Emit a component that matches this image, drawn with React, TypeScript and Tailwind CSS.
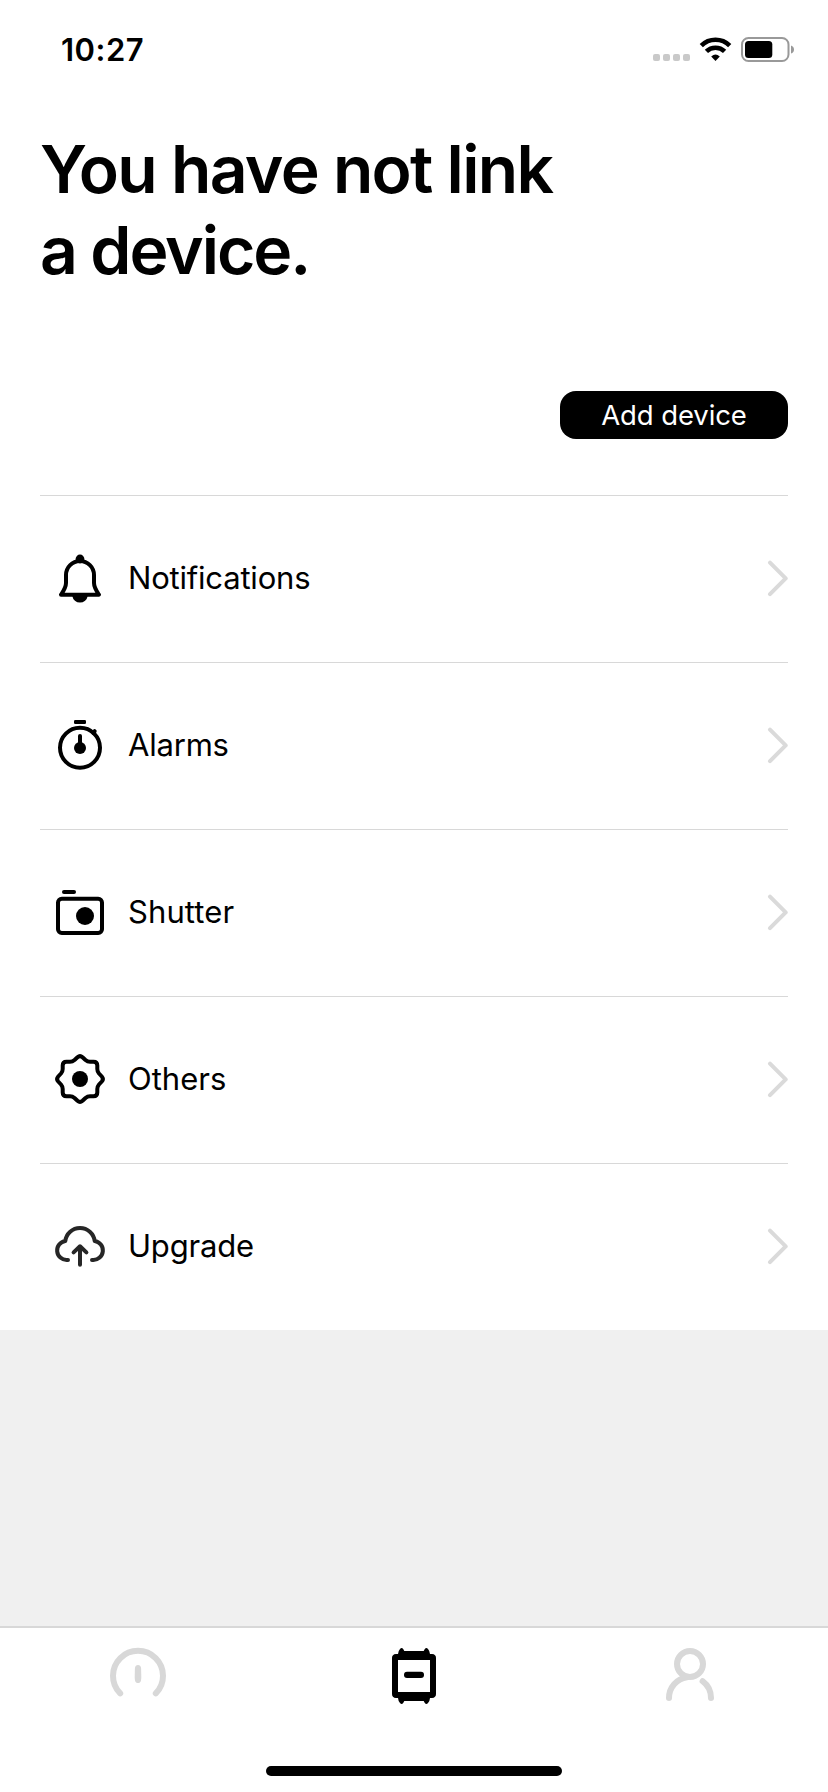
import type { ReactNode } from 'react';

const iconClass = 'h-[60px] w-[60px] shrink-0';

function BellIcon() {
  return (
    <svg viewBox="0 0 60 60" className={iconClass} fill="none" stroke="#000" strokeWidth="4" strokeLinejoin="round">
      <circle cx="30" cy="10" r="4.4" fill="#000" stroke="none" />
      <path d="M11 45.7C13.5 42 16 38.5 16 34V26a14 14 0 0 1 28 0V34C44 38.5 46.5 42 49 45.7Z" />
      <path d="M22.3 47H37.7A7.8 7.8 0 0 1 22.3 47Z" fill="#000" stroke="none" />
    </svg>
  );
}

function TimerIcon() {
  return (
    <svg viewBox="0 0 60 60" className={iconClass} fill="none" stroke="#000" strokeWidth="4" strokeLinecap="round">
      <circle cx="30" cy="31.8" r="20" />
      <rect x="24" y="4" width="12" height="4" rx="1.2" fill="#000" stroke="none" />
      <path d="M43.5 17.2L44.7 15.2" />
      <path d="M30 20V30" />
      <circle cx="30" cy="32" r="6" fill="#000" stroke="none" />
    </svg>
  );
}

function CameraIcon() {
  return (
    <svg viewBox="0 0 60 60" className={iconClass} fill="none" stroke="#000" strokeWidth="4" strokeLinecap="round">
      <rect x="8" y="15.8" width="44" height="34.2" rx="3.8" />
      <path d="M14 9H24" />
      <circle cx="35" cy="33" r="9" fill="#000" stroke="none" />
    </svg>
  );
}

function GearIcon() {
  return (
    <svg viewBox="-30 -29 60 60" className={iconClass} fill="none" stroke="#000" strokeWidth="4" strokeLinejoin="round">
      <path d="M-2.5 -21.8Q0 -24 2.5 -21.8L5.5 -19Q7.5 -17.3 10 -17.3H13.5Q17.3 -17.3 17.3 -13.5V-10Q17.3 -7.5 19 -5.5L21.8 -2.5Q24 0 21.8 2.5L19 5.5Q17.3 7.5 17.3 10V13.5Q17.3 17.3 13.5 17.3H10Q7.5 17.3 5.5 19L2.5 21.8Q0 24 -2.5 21.8L-5.5 19Q-7.5 17.3 -10 17.3H-13.5Q-17.3 17.3 -17.3 13.5V10Q-17.3 7.5 -19 5.5L-21.8 2.5Q-24 0 -21.8 -2.5L-19 -5.5Q-17.3 -7.5 -17.3 -10V-13.5Q-17.3 -17.3 -13.5 -17.3H-10Q-7.5 -17.3 -5.5 -19Z" />
      <circle r="8" fill="#000" stroke="none" />
    </svg>
  );
}

function CloudUploadIcon() {
  return (
    <svg viewBox="0 0 60 60" className={iconClass} fill="none" stroke="#262626" strokeWidth="4" strokeLinecap="round" strokeLinejoin="round">
      <path d="M18 42.9H17A9.5 9.5 0 0 1 15.3 24A14.8 14.8 0 0 1 44.7 24A9.5 9.5 0 0 1 43 42.9H42" />
      <path d="M30 47.8V29.4M23.6 35.4L30 29.3L36.4 35.4" />
    </svg>
  );
}

function Chevron() {
  return (
    <svg viewBox="0 0 24 40" className="h-10 w-6 shrink-0" fill="none" stroke="#dadada" strokeWidth="4" strokeLinecap="round" strokeLinejoin="round">
      <path d="M6 3.6L21.7 19.4L6 35.2" />
    </svg>
  );
}

function Row({ icon, label, tracking = 'tracking-[-0.2px]' }: { icon: ReactNode; label: string; tracking?: string }) {
  return (
    <li className="flex h-[167px] items-center border-t border-[#d8d8d8] pl-2.5">
      {icon}
      <span className={`ml-[18px] flex-1 pb-0.5 text-[31px] leading-[38px] ${tracking}`}>{label}</span>
      <Chevron />
    </li>
  );
}

function StatusBar() {
  return (
    <header className="flex h-[99px] items-start justify-between pt-[30px] pr-[34px] pl-[61px]">
      <span className="text-[31px] leading-[40px] font-semibold tracking-[0.5px]">10:27</span>
      <svg viewBox="652 30 142 40" className="h-10 w-[142px]">
        <g fill="#c9c9c9">
          <rect x="653" y="54" width="7" height="7" rx="2" />
          <rect x="663" y="54" width="7" height="7" rx="2" />
          <rect x="673" y="54" width="7" height="7" rx="2" />
          <rect x="683" y="54" width="7" height="7" rx="2" />
        </g>
        <g fill="none" stroke="#000">
          <path d="M701.3 45.6A20.3 20.3 0 0 1 729.7 45.6" strokeWidth="4.6" />
          <path d="M706.4 51.4A13 13 0 0 1 724.6 51.4" strokeWidth="4.6" />
        </g>
        <path d="M715.5 61L711.2 56.4Q715.5 52.8 719.8 56.4Z" />
        <rect x="742" y="38" width="46.5" height="23" rx="6.5" fill="none" stroke="#999" strokeWidth="2" />
        <rect x="745" y="41" width="27.3" height="17" rx="3.5" />
        <path d="M791 45.5Q794 46.5 794 49.5T791 53.5Z" fill="#999" />
      </svg>
    </header>
  );
}

function TabBar() {
  return (
    <nav className="flex h-[166px] flex-col items-center justify-between border-t-2 border-[#d8d8d8] bg-white pt-[18px] pb-4">
      <div className="grid w-full grid-cols-3 justify-items-center">
        <svg viewBox="0 0 60 60" className={iconClass} fill="none" stroke="#d8d8d8" strokeWidth="6" strokeLinecap="round">
          <path d="M12.2 47.4A25 25 0 1 1 47.8 47.4" />
          <path d="M30 19C32 19 33 20.5 33.1 22.5L33.3 31C33.3 35.5 32.3 37 30 37S26.7 35.5 26.7 31L26.9 22.5C27 20.5 28 19 30 19Z" fill="#d8d8d8" stroke="none" />
        </svg>
        <svg viewBox="0 0 60 60" className={iconClass}>
          <path d="M14 8Q14.2 5 16 3Q17.7 1 19.2 3L20.3 5H39.7L40.8 3Q42.3 1 44 3Q45.8 5 46 8H48Q52 8.3 52 12V48Q52 51.7 48 52H46Q45.8 55 44 57Q42.3 59 40.8 57L39.7 55H20.3L19.2 57Q17.7 59 16 57Q14.2 55 14 52H12Q8 51.7 8 48V12Q8 8.3 12 8ZM14 14V46H46V14Z" fillRule="evenodd" />
          <rect x="20" y="25.8" width="20" height="6.2" rx="3" />
        </svg>
        <svg viewBox="0 0 60 60" className={iconClass} fill="none" stroke="#d8d8d8" strokeWidth="6" strokeLinecap="round">
          <circle cx="30" cy="18" r="13" />
          <path d="M9 52A21 21 0 0 1 27 31.2M42.6 35.2A21 21 0 0 1 51 52" />
        </svg>
      </div>
      <div className="h-2.5 w-[296px] rounded-full bg-black" />
    </nav>
  );
}

export default function App() {
  return (
    <div className="flex h-[1792px] w-[828px] flex-col bg-[#f0f0f0] font-['Inter',sans-serif] text-black">
      <div className="bg-white">
        <StatusBar />
        <main className="px-10">
          <h1 className="pt-[30px] text-[66px] leading-[81px] font-semibold">
            <span className="block tracking-[-1.7px]">You have not link</span>
            <span className="block tracking-[-2.1px]">a device.</span>
          </h1>
          <div className="mt-[100px] flex justify-end">
            <button className="h-12 w-[228px] rounded-2xl bg-black text-[27.5px] leading-[48px] tracking-[-0.1px] text-white">
              Add device
            </button>
          </div>
          <ul className="mt-14">
            <Row icon={<BellIcon />} label="Notifications" />
            <Row icon={<TimerIcon />} label="Alarms" />
            <Row icon={<CameraIcon />} label="Shutter" tracking="tracking-[0.1px]" />
            <Row icon={<GearIcon />} label="Others" tracking="tracking-normal" />
            <Row icon={<CloudUploadIcon />} label="Upgrade" />
          </ul>
        </main>
      </div>
      <div className="flex-1" />
      <TabBar />
    </div>
  );
}
